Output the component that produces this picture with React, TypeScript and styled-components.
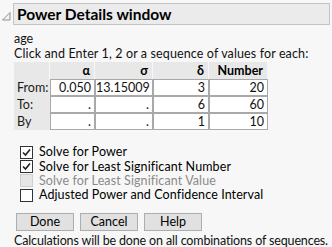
import styled, { createGlobalStyle } from "styled-components";

const GlobalStyle = createGlobalStyle`
  html, body {
    margin: 0;
    padding: 0;
    background: #f7f7f7;
  }
  body {
    font-family: Lato, "Noto Sans", sans-serif;
    font-size: 12.5px;
    color: #111;
  }
`;

const Page = styled.div`
  width: 332px;
  height: 247px;
  padding: 3px 2px 0 2px;
  box-sizing: border-box;
  overflow: hidden;
`;

const Header = styled.div`
  display: flex;
  align-items: center;
  gap: 2px;
`;

const Disclosure = styled.svg`
  width: 9px;
  height: 9px;
  margin-top: 4px;
  flex: none;
`;

const TitleBox = styled.div`
  flex: 1;
  height: 20px;
  border: 1px solid #c4c4c4;
  background: #ebebeb;
  padding: 0 3px;
  font-size: 15.5px;
  font-weight: bold;
  line-height: 20px;
  color: #000;
`;

const Body = styled.div`
  padding: 6px 0 0 12px;
`;

const Line = styled.div<{ $wide?: boolean }>`
  line-height: 15px;
  white-space: nowrap;
  letter-spacing: ${(p) => (p.$wide ? "0.12px" : "0")};
`;

const Table = styled.div`
  display: grid;
  grid-template-columns: 36px 45px 58px 56px 59px;
  grid-auto-rows: 17px;
  width: max-content;
  margin-top: 1px;
  background: #e8e8e8;
`;

const HeadCell = styled.div`
  height: 18px;
  line-height: 18px;
  text-align: right;
  font-weight: bold;
  padding-right: 4px;
  border-right: 1px solid #f7f7f7;
  color: #000;
`;

const RowLabel = styled.div`
  line-height: 17px;
  padding-left: 3px;
  color: #1a1a1a;
`;

const Cell = styled.div`
  background: #fff;
  border: 1px solid #a9a9a9;
  text-align: right;
  padding-right: 3px;
  line-height: 15px;
  color: #111;
`;

const Checks = styled.div`
  display: flex;
  flex-direction: column;
  margin: 15px 0 0 6px;
`;

const CheckRow = styled.label<{ $disabled?: boolean }>`
  display: flex;
  align-items: center;
  gap: 6px;
  height: 14.4px;
  line-height: 14px;
  letter-spacing: 0.1px;
  color: ${(p) => (p.$disabled ? "#8a8a8a" : "#000")};
`;

const Box = styled.span<{ $disabled?: boolean }>`
  width: 11px;
  height: 11px;
  border: 1px solid ${(p) => (p.$disabled ? "#cfcfcf" : "#333")};
  background: ${(p) => (p.$disabled ? "#e6e6e6" : "#fff")};
  display: flex;
  align-items: center;
  justify-content: center;
  flex: none;
`;

const Buttons = styled.div`
  display: flex;
  gap: 6px;
  margin: 10px 0 0 2px;
`;

const Button = styled.button`
  width: 58px;
  height: 18px;
  padding: 0;
  border: 1px solid #adadad;
  background: #e1e1e1;
  font-family: inherit;
  font-size: 12.5px;
  color: #000;
  line-height: 16px;
`;

const Footer = styled.div`
  margin-top: 2px;
  line-height: 15px;
  white-space: nowrap;
  letter-spacing: -0.15px;
  color: #111;
`;

const Tick = () => (
  <svg width="9" height="9" viewBox="0 0 9 9">
    <path d="M1 4.5 L3.5 7 L8 1.5" fill="none" stroke="#222" strokeWidth="1.6" />
  </svg>
);

const rows = [
  { label: "From:", values: ["0.050", "13.15009", "3", "20"] },
  { label: "To:", values: [".", ".", "6", "60"] },
  { label: "By", values: [".", ".", "1", "10"] },
];

const options = [
  { text: "Solve for Power", checked: true },
  { text: "Solve for Least Significant Number", checked: true },
  { text: "Solve for Least Significant Value", disabled: true },
  { text: "Adjusted Power and Confidence Interval" },
];

export default function App() {
  return (
    <>
      <GlobalStyle />
      <Page>
        <Header>
          <Disclosure viewBox="0 0 9 9">
            <path d="M8 0.5 L8 8 L0.5 8 Z" fill="#f3f3f3" stroke="#8f8f8f" strokeWidth="1" />
          </Disclosure>
          <TitleBox>Power Details window</TitleBox>
        </Header>
        <Body>
          <Line>age</Line>
          <Line $wide>Click and Enter 1, 2 or a sequence of values for each:</Line>
          <Table>
            <HeadCell />
            <HeadCell>α</HeadCell>
            <HeadCell>σ</HeadCell>
            <HeadCell>δ</HeadCell>
            <HeadCell>Number</HeadCell>
            {rows.map((r) => [
              <RowLabel key={r.label}>{r.label}</RowLabel>,
              ...r.values.map((v, i) => <Cell key={r.label + i}>{v}</Cell>),
            ])}
          </Table>
          <Checks>
            {options.map((o) => (
              <CheckRow key={o.text} $disabled={o.disabled}>
                <Box $disabled={o.disabled}>{o.checked && <Tick />}</Box>
                {o.text}
              </CheckRow>
            ))}
          </Checks>
          <Buttons>
            <Button>Done</Button>
            <Button>Cancel</Button>
            <Button>Help</Button>
          </Buttons>
          <Footer>Calculations will be done on all combinations of sequences.</Footer>
        </Body>
      </Page>
    </>
  );
}
